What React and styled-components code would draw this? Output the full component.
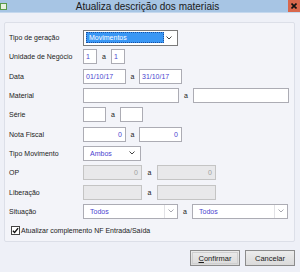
import React from 'react'
import styled, { createGlobalStyle } from 'styled-components'

const Global = createGlobalStyle`
  html, body {
    margin: 0;
    padding: 0;
    background: #eef0f7;
  }
  * { box-sizing: border-box; }
`

const Window = styled.div`
  width: 300px;
  height: 272px;
  display: flex;
  flex-direction: column;
  background: #eef0f7;
  font-family: "Liberation Sans", Arial, sans-serif;
  color: #1e1e1e;
  overflow: hidden;
`

const TitleBar = styled.div`
  height: 13px;
  background: #a7c5e4;
  border-bottom: 1px solid #c4d8ee;
  display: flex;
  align-items: center;
  position: relative;
`

const AppIcon = styled.div`
  width: 7px;
  height: 7px;
  background: #e8f0e0;
  border: 1px solid #5a9a4a;
`

const Title = styled.div`
  flex: 1;
  text-align: center;
  font-size: 10px;
  color: #1a1a1a;
  padding-top: 1px;
`

const CloseBtn = styled.div`
  width: 12px;
  height: 12px;
  background: #d8674c;
  display: flex;
  align-items: center;
  justify-content: center;
  align-self: flex-start;
`

const Content = styled.div`
  flex: 1;
  padding: 9px 5px 0 4px;
  display: flex;
  flex-direction: column;
`

const Panel = styled.div`
  height: 220px;
  border: 1px solid #dcdfe8;
  border-radius: 2px;
  background: #f3f4f9;
  padding: 5px 0 0 4px;
  display: flex;
  flex-direction: column;
`

const Row = styled.div`
  display: grid;
  grid-template-columns: 74px auto;
  align-items: center;
  height: 19.3px;
`

const Label = styled.div`
  font-size: 7px;
  color: #222;
  white-space: nowrap;
`

const Fields = styled.div`
  display: flex;
  align-items: center;
`

const Box = styled.div`
  width: ${p => p.w}px;
  height: ${p => p.h || 15}px;
  border: 1px solid ${p => (p.disabled ? '#c4c4c4' : '#acacb4')};
  background: ${p => (p.disabled ? '#e8e8ea' : '#ffffff')};
  display: flex;
  align-items: center;
  justify-content: ${p => (p.right ? 'flex-end' : 'flex-start')};
  padding: 0 ${p => (p.right ? 3 : 2)}px 0 2px;
  font-size: 7px;
  color: ${p => (p.disabled ? '#a0a0a0' : '#4a3fd0')};
`

const Sep = styled.div`
  width: ${p => p.w || 14}px;
  text-align: center;
  font-size: 7px;
  color: #222;
`

const SelectBox = styled.div`
  width: ${p => p.w}px;
  height: ${p => p.h || 15}px;
  border: 1px solid ${p => (p.focus ? '#7a7a7a' : '#acacb4')};
  background: #fff;
  display: flex;
  align-items: center;
  padding: 0 3px 0 2px;
  font-size: 7px;
  color: #4a3fd0;
`

const SelectText = styled.div`
  flex: 1;
  height: ${p => (p.hl ? '11px' : 'auto')};
  display: flex;
  align-items: center;
  padding-left: ${p => (p.hl ? 2 : 4)}px;
  background: ${p => (p.hl ? '#3a97f4' : 'transparent')};
  border: ${p => (p.hl ? '1px dotted #1a4fa0' : 'none')};
  color: ${p => (p.hl ? '#fff' : '#4a3fd0')};
`

const ArrowWrap = styled.div`
  width: ${p => (p.split ? 12 : 10)}px;
  height: 100%;
  display: flex;
  align-items: center;
  justify-content: center;
  border-left: ${p => (p.split ? '1px solid #e2e2e6' : 'none')};
  margin-right: ${p => (p.split ? -2 : 0)}px;
`

const CheckRow = styled.label`
  display: flex;
  align-items: center;
  height: 19.3px;
  padding-left: 2px;
  font-size: 7px;
  color: #222;
  gap: 1px;
`

const CheckBox = styled.div`
  width: 9px;
  height: 9px;
  border: 1px solid #444;
  background: #fff;
  display: flex;
  align-items: center;
  justify-content: center;
`

const Footer = styled.div`
  display: flex;
  justify-content: flex-end;
  gap: 5px;
  padding-top: 8px;
`

const Button = styled.div`
  width: 50px;
  height: 16px;
  border: 1px solid #8c8c8c;
  background: linear-gradient(#ececec, #dadada);
  display: flex;
  align-items: center;
  justify-content: center;
  font-size: 7.5px;
  color: #1a1a1a;
  outline: ${p => (p.primary ? '1px solid #cfcfcf' : 'none')};
  outline-offset: -3px;
`

const Chevron = ({ color = '#555' }) => (
  <svg width="6" height="4" viewBox="0 0 6 4">
    <path d="M0.5 0.5 L3 3 L5.5 0.5" fill="none" stroke={color} strokeWidth="1" />
  </svg>
)

const Select = ({ w, h, value, hl, split, focus }) => (
  <SelectBox w={w} h={h} focus={focus}>
    <SelectText hl={hl}>{value}</SelectText>
    <ArrowWrap split={split}>
      <Chevron color={split ? '#a8a8b0' : '#444'} />
    </ArrowWrap>
  </SelectBox>
)

const Pair = ({ w, left, right, right2, disabled, sep }) => (
  <Fields>
    <Box w={w} right={right} disabled={disabled}>{left}</Box>
    <Sep w={sep}>a</Sep>
    <Box w={w} right={right} disabled={disabled}>{right2}</Box>
  </Fields>
)

export default function App() {
  return (
    <Window>
      <Global />
      <TitleBar>
        <AppIcon />
        <Title>Atualiza descrição dos materiais</Title>
        <CloseBtn>
          <svg width="6" height="6" viewBox="0 0 6 6">
            <path d="M0.5 0.5 L5.5 5.5 M5.5 0.5 L0.5 5.5" stroke="#111" strokeWidth="1.6" />
          </svg>
        </CloseBtn>
      </TitleBar>
      <Content>
        <Panel>
          <Row>
            <Label>Tipo de geração</Label>
            <Fields>
              <Select w={95} h={16} value="Movimentos" hl focus />
            </Fields>
          </Row>
          <Row>
            <Label>Unidade de Negócio</Label>
            <Pair w={14} left="1" right2="1" />
          </Row>
          <Row>
            <Label>Data</Label>
            <Pair w={43} left="01/10/17" right2="31/10/17" sep={13} />
          </Row>
          <Row>
            <Label>Material</Label>
            <Pair w={96} left="" right2="" />
          </Row>
          <Row>
            <Label>Série</Label>
            <Pair w={23} left="" right2="" />
          </Row>
          <Row>
            <Label>Nota Fiscal</Label>
            <Pair w={43} left="0" right2="0" right sep={13} />
          </Row>
          <Row>
            <Label>Tipo Movimento</Label>
            <Fields>
              <Select w={58} value="Ambos" />
            </Fields>
          </Row>
          <Row>
            <Label>OP</Label>
            <Pair w={59} left="0" right2="0" right disabled sep={15} />
          </Row>
          <Row>
            <Label>Liberação</Label>
            <Pair w={59} left="" right2="" disabled sep={15} />
          </Row>
          <Row>
            <Label>Situação</Label>
            <Fields>
              <Select w={95} value="Todos" split />
              <Sep>a</Sep>
              <Select w={96} value="Todos" split />
            </Fields>
          </Row>
          <CheckRow>
            <CheckBox>
              <svg width="7" height="7" viewBox="0 0 8 8">
                <path d="M1 4.2 L3 6.3 L7 1.3" fill="none" stroke="#111" strokeWidth="1.5" />
              </svg>
            </CheckBox>
            Atualizar complemento NF Entrada/Saída
          </CheckRow>
        </Panel>
        <Footer>
          <Button primary>
            <span><u>C</u>onfirmar</span>
          </Button>
          <Button>Cancelar</Button>
        </Footer>
      </Content>
    </Window>
  )
}
